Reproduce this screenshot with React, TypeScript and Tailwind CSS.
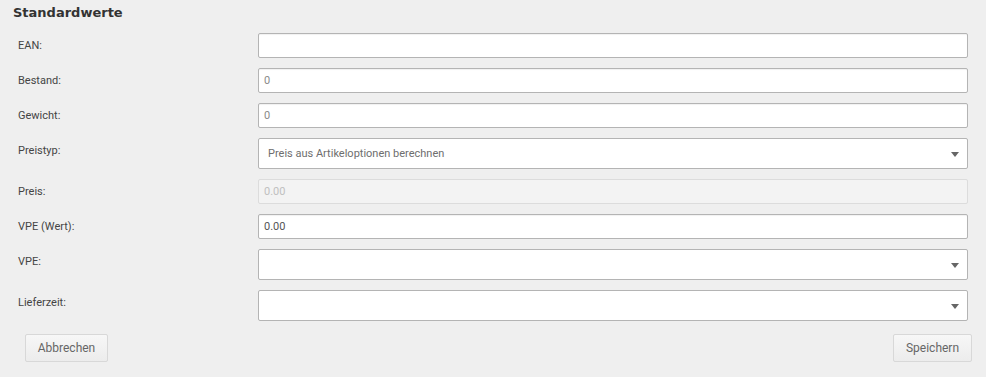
import React from 'react';

const font = { fontFamily: 'Roboto, "Liberation Sans", sans-serif' };

function Label({ children }: { children: React.ReactNode }) {
  return (
    <div className="w-[240px] shrink-0 pt-[6px] text-[11px] leading-[14px] text-[#444]">{children}</div>
  );
}

function TextInput({ value, tone = 'gray', disabled = false }: { value?: string; tone?: 'gray' | 'dark'; disabled?: boolean }) {
  return (
    <div
      className={`flex h-[25px] flex-1 items-center rounded-[2px] border px-[5px] pt-[1px] text-[11px] ${
        disabled
          ? 'border-[#dcdcdc] bg-[#f3f3f3] text-[#c0c0c0]'
          : 'border-[#b4b4b4] bg-white shadow-[inset_0_1px_1px_rgba(0,0,0,0.06)]'
      } ${!disabled && tone === 'dark' ? 'text-[#555]' : ''} ${!disabled && tone === 'gray' ? 'text-[#8a8a8a]' : ''}`}
    >
      {value}
    </div>
  );
}

function Select({ value }: { value?: string }) {
  return (
    <div className="flex h-[31px] flex-1 items-center justify-between rounded-[2px] border border-[#b4b4b4] bg-white pl-[9px] pr-[8px] pt-[1px] text-[11px] text-[#6e6e6e]">
      <span>{value}</span>
      <svg width="8" height="5" viewBox="0 0 8 5" className="mt-[1px]">
        <path d="M0 0h8L4 5z" fill="#666" />
      </svg>
    </div>
  );
}

export default function App() {
  return (
    <div className="min-h-[377px] bg-[#efefef]" style={font}>
      <div className="pl-[13px] pt-[5px]">
        <h2
          className="text-[13px] font-bold leading-[16px] text-[#333]"
          style={{ fontFamily: '"DejaVu Sans", Verdana, sans-serif' }}
        >
          Standardwerte
        </h2>
      </div>

      <div className="mt-[12px] flex flex-col gap-[10px] pl-[18px] pr-[18px]">
        <div className="flex">
          <Label>EAN:</Label>
          <TextInput />
        </div>
        <div className="flex">
          <Label>Bestand:</Label>
          <TextInput value="0" />
        </div>
        <div className="flex">
          <Label>Gewicht:</Label>
          <TextInput value="0" />
        </div>
        <div className="flex">
          <Label>Preistyp:</Label>
          <Select value="Preis aus Artikeloptionen berechnen" />
        </div>
        <div className="flex">
          <Label>Preis:</Label>
          <TextInput value="0.00" disabled />
        </div>
        <div className="flex">
          <Label>VPE (Wert):</Label>
          <TextInput value="0.00" tone="dark" />
        </div>
        <div className="flex">
          <Label>VPE:</Label>
          <Select />
        </div>
        <div className="flex">
          <Label>Lieferzeit:</Label>
          <Select />
        </div>
      </div>

      <div className="mt-[13px] flex justify-between pl-[25px] pr-[14px]">
        <button className="h-[28px] w-[83px] rounded-[2px] border border-[#d8d8d8] bg-gradient-to-b from-[#f7f7f7] to-[#ececec] text-[12px] text-[#666]">
          Abbrechen
        </button>
        <button className="h-[28px] w-[79px] rounded-[2px] border border-[#d8d8d8] bg-gradient-to-b from-[#f7f7f7] to-[#ececec] text-[12px] text-[#666]">
          Speichern
        </button>
      </div>
    </div>
  );
}
